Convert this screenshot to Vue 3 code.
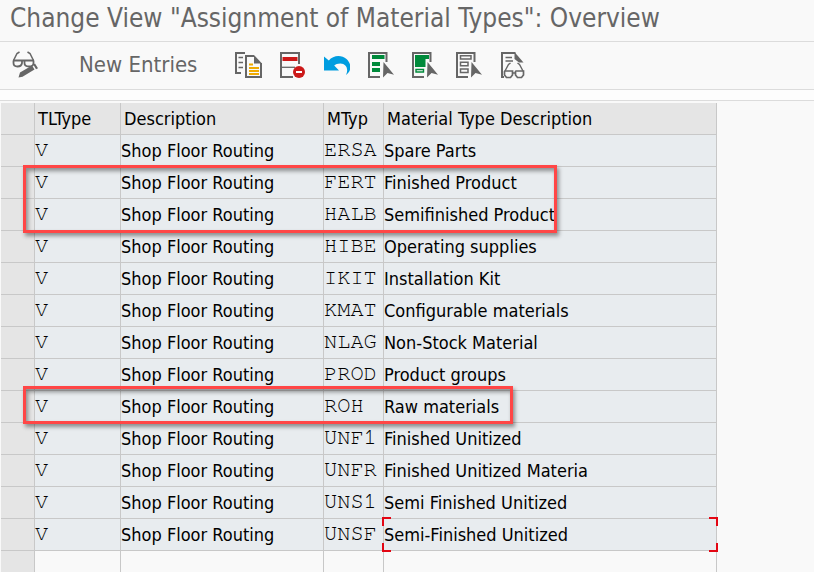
<script setup>
const rows = [
  { mtyp: 'ERSA', text: 'Spare Parts' },
  { mtyp: 'FERT', text: 'Finished Product' },
  { mtyp: 'HALB', text: 'Semifinished Product' },
  { mtyp: 'HIBE', text: 'Operating supplies' },
  { mtyp: 'IKIT', text: 'Installation Kit' },
  { mtyp: 'KMAT', text: 'Configurable materials' },
  { mtyp: 'NLAG', text: 'Non-Stock Material' },
  { mtyp: 'PROD', text: 'Product groups' },
  { mtyp: 'ROH', text: 'Raw materials' },
  { mtyp: 'UNF1', text: 'Finished Unitized' },
  { mtyp: 'UNFR', text: 'Finished Unitized Materia' },
  { mtyp: 'UNS1', text: 'Semi Finished Unitized' },
  { mtyp: 'UNSF', text: 'Semi-Finished Unitized', focused: true },
]
</script>

<template>
  <div class="page">
    <header class="title"><h1>Change View "Assignment of Material Types": Overview</h1></header>

    <nav class="toolbar" aria-label="Application toolbar">
      <button class="icon" type="button" aria-label="Display / Change">
        <svg viewBox="0 0 28 28" fill="none" stroke="#666" stroke-width="1.8">
          <path d="M1.500 9.500 5 2.500 7.500 1M21.500 9.500 18 2.500 15.500 1" stroke-width="1.500" />
          <path d="M1 9.500H22M1.500 9.500V12Q1.500 15.500 5.500 15.500T10 12V9.500M12.500 9.500V12Q12.500 15.500 17 15.500T21.500 12V9.500" />
          <path d="M6.500 26.500 8 21.500 20 14.500 22.500 18.500 10.500 25.800ZM21.300 13.600 23 12.600 26 17.300 24 18.200Z" fill="#666" stroke="none" />
        </svg>
      </button>

      <button class="text-button" type="button">New Entries</button>

      <button class="icon" type="button" aria-label="Copy As">
        <svg viewBox="0 0 28 28" fill="none" stroke="#666" stroke-width="2">
          <path d="M11 2H2V22H7" />
          <path d="M4.500 6.500H9M4.500 11.500H9M4.500 16.500H9" stroke-width="1.600" />
          <path d="M20 5H12V26H27V12" />
          <path d="M20 4 28 12.500H20Z" fill="#666" stroke="none" />
          <path d="M15 13.500H19M15 17H25M15 20H25M15 23H25" stroke="#f0ab00" stroke-width="2" />
        </svg>
      </button>
      <button class="icon" type="button" aria-label="Delete">
        <svg viewBox="0 0 28 28" fill="none" stroke="#666" stroke-width="2">
          <path d="M21 13V2H3V26H15" />
          <path d="M3 16.300H17" stroke-width="1.300" />
          <path d="M4.500 8H19.500" stroke="#cc1919" stroke-width="4" />
          <circle cx="21" cy="21" r="6" fill="#cc1919" stroke="none" />
          <path d="M18 21H24" stroke="#fff" stroke-width="2" />
        </svg>
      </button>
      <button class="icon" type="button" aria-label="Undo Change">
        <svg viewBox="0 0 28 28">
          <path fill="#009de0" d="M2 5.500 6.800 9.500C11 4 19.500 3.300 24.500 8 30 13.200 29.500 20.500 24 24 27 18 24 12.500 18.500 12.500 15.500 12.500 13.500 13.300 12.200 14.500L17 19.500H2Z" />
        </svg>
      </button>
      <button class="icon" type="button" aria-label="Select All">
        <svg viewBox="0 0 28 28" fill="none" stroke="#666" stroke-width="2">
          <path d="M20.500 11V2H3V26H14" />
          <path d="M6 6H18.500M6 13H14M6 19H14" stroke="#008a3b" stroke-width="4" />
          <path d="M17.500 11 28 23.800 21.500 22 17 26.500Z" fill="#666" stroke="none" />
        </svg>
      </button>
      <button class="icon" type="button" aria-label="Select Block">
        <svg viewBox="0 0 28 28" fill="none" stroke="#666" stroke-width="2">
          <path d="M20.500 11V2H3V26H14" />
          <path d="M5 4H19V8H15.500V16H5Z" fill="#008a3b" stroke="none" />
          <path d="M6 18.500H13.500V21H6Z" stroke="#008a3b" stroke-width="1.400" />
          <path d="M17.500 11 28 23.800 21.500 22 17 26.500Z" fill="#666" stroke="none" />
        </svg>
      </button>
      <button class="icon" type="button" aria-label="Deselect All">
        <svg viewBox="0 0 28 28" fill="none" stroke="#666" stroke-width="2">
          <path d="M20.500 11V2H3V26H14" />
          <path d="M6.500 4.700H17V8H6.500ZM6.500 11.200H14V14.800H6.500ZM6.500 18H14V21.500H6.500Z" stroke-width="1.500" />
          <path d="M17.500 11 28 23.800 21.500 22 17 26.500Z" fill="#666" stroke="none" />
        </svg>
      </button>
      <button class="icon" type="button" aria-label="Display Configuration">
        <svg viewBox="0 0 28 28" fill="none" stroke="#666" stroke-width="2">
          <path d="M17.500 2H4V26H6" />
          <path d="M16.500 1 25.500 11.500H21L16.500 8Z" fill="#666" stroke="none" />
          <path d="M7.500 6.500H14M7.500 10H15" stroke-width="1.700" />
          <path d="M7 20 10.500 13.500 12.500 12M25 20 21.500 13.500 19.500 12" stroke-width="1.400" />
          <path d="M7 20H14.500V24L12.500 26.500H8.500L6.500 24V20.500ZM18 20H25.500V24L23.500 26.500H19.500L17.500 24V20.500ZM14 22H18" stroke-width="1.700" />
        </svg>
      </button>
    </nav>

    <main class="content">
      <div class="table-wrap">
        <table>
          <colgroup>
            <col class="c-sel" /><col class="c-type" /><col class="c-desc" /><col class="c-mtyp" /><col class="c-text" />
          </colgroup>
          <thead>
            <tr>
              <th class="sel"></th>
              <th>TLType</th>
              <th>Description</th>
              <th>MTyp</th>
              <th>Material Type Description</th>
            </tr>
          </thead>
          <tbody>
            <tr v-for="row in rows" :key="row.mtyp">
              <td class="sel"></td>
              <td class="code">V</td>
              <td>Shop Floor Routing</td>
              <td class="code">{{ row.mtyp }}</td>
              <td :class="{ focused: row.focused }">{{ row.text }}</td>
            </tr>
            <tr class="empty">
              <td class="sel"></td><td></td><td></td><td></td><td></td>
            </tr>
          </tbody>
        </table>
        <div class="mark mark-products"></div>
        <div class="mark mark-raw"></div>
      </div>
    </main>
  </div>
</template>

<style>
body {
  margin: 0;
  background: #f9f9f9;
}
</style>

<style scoped>
.page {
  display: flex;
  flex-direction: column;
  height: 100vh;
  overflow: hidden;
  background: #f9f9f9;
  font-family: Tahoma, "DejaVu Sans Condensed", "Noto Sans", sans-serif;
  color: #000;
}
.title {
  flex: none;
  padding: 0 10px 4px;
  border-bottom: 1px solid #dcdcdc;
}
h1 {
  margin: 0;
  font-size: 26px;
  font-weight: 400;
  line-height: 37px;
  white-space: nowrap;
  color: #666;
}
.toolbar {
  flex: none;
  display: flex;
  align-items: center;
  gap: 16px;
  height: 46px;
  padding: 0 12px 1px;
  border-bottom: 1px solid #dcdcdc;
}
button {
  margin: 0;
  padding: 0;
  border: 0;
  background: none;
  font-family: inherit;
  color: #666;
}
.icon {
  flex: none;
  width: 28px;
  height: 28px;
}
.icon svg {
  display: block;
  width: 28px;
  height: 28px;
}
.text-button {
  width: 155px;
  margin-left: 23px;
  font-size: 22px;
  line-height: 28px;
  text-align: left;
  white-space: nowrap;
  margin-right: -16px;
}
.content {
  flex: 1;
  min-height: 0;
  padding: 2px 0 0 1px;
  border-top: 1px solid #dcdcdc;
  margin-top: 10px;
  box-shadow: 0 -10px #fdfdfd;
  overflow: hidden;
}
.table-wrap {
  position: relative;
}
table {
  table-layout: fixed;
  width: 716px;
  border-collapse: separate;
  border-spacing: 0;
  font-size: 18px;
  line-height: 31px;
}
.c-sel { width: 34px; }
.c-type { width: 86px; }
.c-desc { width: 203px; }
.c-mtyp { width: 60px; }
.c-text { width: 333px; }
th,
td {
  box-sizing: border-box;
  height: 32px;
  padding: 0;
  border-right: 1px solid #c8c8c8;
  border-bottom: 1px solid #c8c8c8;
  text-align: left;
  font-weight: 400;
  white-space: nowrap;
}
th {
  padding: 1px 0 0 3px;
  line-height: 30px;
  background: #e5e5e5;
}
td {
  background: #e8ecef;
}
.sel {
  background: #e5e5e5;
}
.empty td:not(.sel) {
  background: #f9f9f9;
}
.code {
  font-family: "Nimbus Mono PS", FreeMono, "Courier New", "Liberation Mono", monospace;
  font-size: 22px;
  line-height: 28px;
  vertical-align: top;
}
.focused {
  position: relative;
}
.focused::after {
  content: "";
  position: absolute;
  inset: -2px;
  --h: linear-gradient(#e30613, #e30613);
  background:
    var(--h) 0 0 / 9px 2px, var(--h) 0 0 / 2px 9px,
    var(--h) 100% 0 / 9px 2px, var(--h) 100% 0 / 2px 9px,
    var(--h) 0 100% / 9px 2px, var(--h) 0 100% / 2px 9px,
    var(--h) 100% 100% / 9px 2px, var(--h) 100% 100% / 2px 9px;
  background-repeat: no-repeat;
}
.mark {
  position: absolute;
  left: 22px;
  box-sizing: border-box;
  border: 3px solid #ff4646;
  box-shadow: 2px 3px 4px rgba(0, 0, 0, 0.4), inset 2px 3px 4px rgba(0, 0, 0, 0.4);
}
.mark-products {
  top: 62px;
  width: 534px;
  height: 68px;
}
.mark-raw {
  top: 283px;
  width: 490px;
  height: 38px;
}
</style>
